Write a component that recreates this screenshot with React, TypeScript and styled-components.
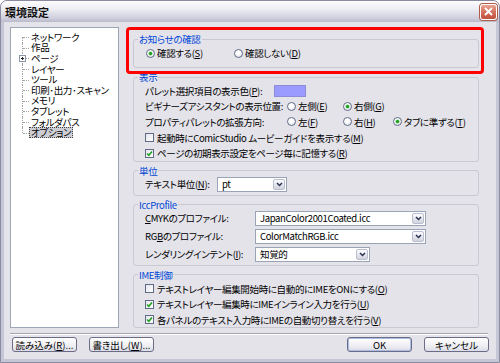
import React from "react";
import styled, { createGlobalStyle } from "styled-components";

const GlobalStyle = createGlobalStyle`
  html, body { margin: 0; padding: 0; background: #ffffff; }
  * { box-sizing: border-box; }
`;

const Window = styled.div`
  width: 500px;
  height: 363px;
  display: flex;
  flex-direction: column;
  border: 1px solid #8a8aa0;
  border-radius: 7px 7px 0 0;
  overflow: hidden;
  background: #c6c6d6;
  font-family: "Noto Sans CJK JP", "Noto Sans", sans-serif;
  font-size: 9.5px;
  font-feature-settings: "palt";
  letter-spacing: -0.35px;
  color: #000;
`;

const TitleBar = styled.div`
  height: 21px;
  flex: none;
  display: flex;
  align-items: center;
  justify-content: space-between;
  padding: 0 2px 0 4px;
  background: linear-gradient(#fdfdfe, #ececf2 40%, #d0d0de 80%, #babacc);
`;

const Title = styled.span`
  font-size: 11px;
  font-weight: bold;
  letter-spacing: 0;
  color: #101010;
`;

const CloseButton = styled.div`
  width: 17px;
  height: 16px;
  border: 1px solid #ffffff;
  border-radius: 3px;
  background: linear-gradient(#e9a594, #d4705c 50%, #c0503c);
  box-shadow: 0 0 0 1px #b05a4a;
  display: flex;
  align-items: center;
  justify-content: center;
`;

const Body = styled.div`
  flex: 1;
  margin: 0 3px 3px;
  background: #e4e3ea;
  padding: 5px 0 0 6px;
  display: flex;
  flex-direction: column;
`;

const Main = styled.div`
  display: flex;
  height: 301px;
  flex: none;
`;

const Tree = styled.div`
  width: 109px;
  height: 301px;
  flex: none;
  background: #ffffff;
  border: 1px solid #9ea6b6;
  padding-top: 4px;
`;

const TreeItem = styled.div<{ $first?: boolean; $last?: boolean }>`
  position: relative;
  height: 10.6px;
  display: flex;
  align-items: center;
  padding-left: 18px;
  white-space: nowrap;

  &::before {
    content: "";
    position: absolute;
    left: 11px;
    top: ${(p) => (p.$first ? "50%" : "0")};
    bottom: ${(p) => (p.$last ? "50%" : "0")};
    border-left: 1px dotted #a4a4a4;
  }
  &::after {
    content: "";
    position: absolute;
    left: 12px;
    width: 6px;
    top: 50%;
    border-top: 1px dotted #a4a4a4;
  }
`;

const TreeLabel = styled.span<{ $selected?: boolean }>`
  padding: 0 1px;
  height: 11px;
  line-height: 9px;
  border: 1px ${(p) => (p.$selected ? "dotted #404040" : "solid transparent")};
  background: ${(p) => (p.$selected ? "#cdcdd5" : "transparent")};
`;

const Expander = styled.svg`
  position: absolute;
  left: 8px;
  top: 50%;
  margin-top: -3.5px;
  z-index: 1;
`;

const Settings = styled.div`
  position: relative;
  width: 346px;
  margin-left: 14px;
  padding-top: 6px;
  display: flex;
  flex-direction: column;
`;

const Highlight = styled.div`
  position: absolute;
  left: -7px;
  right: -5px;
  top: 0;
  height: 47px;
  border: 3px solid #ff0000;
  border-radius: 4px;
  pointer-events: none;
`;

const Group = styled.fieldset<{ $mt?: number; $pb?: number }>`
  margin: ${(p) => p.$mt ?? 3}px 0 0;
  padding: 0 4px ${(p) => p.$pb ?? 0}px 4px;
  border: 1px solid #c9c9d3;
  border-radius: 3px;
  min-width: 0;
`;

const Legend = styled.legend`
  padding: 0 1px;
  height: 12px;
  line-height: 12px;
  color: #0046d5;
`;

const Rows = styled.div`
  padding-left: 7px;
  display: flex;
  flex-direction: column;
`;

const Row = styled.div<{ $h?: number; $mb?: number }>`
  display: flex;
  align-items: center;
  height: ${(p) => p.$h ?? 16}px;
  margin-bottom: ${(p) => p.$mb ?? 0}px;
  white-space: nowrap;
`;

const FieldLabel = styled.span<{ $w: number }>`
  width: ${(p) => p.$w}px;
  flex: none;
  white-space: nowrap;
`;

const Swatch = styled.span`
  width: 32px;
  height: 12px;
  background: #9b9bff;
  border: 1px solid #8c8cd8;
`;

const ChoiceItem = styled.label<{ $w?: number }>`
  display: flex;
  align-items: center;
  gap: 2px;
  width: ${(p) => (p.$w ? `${p.$w}px` : "auto")};
  flex: none;
`;

const RadioCircle = styled.span<{ $on?: boolean }>`
  width: 9px;
  height: 9px;
  margin-left: 1px;
  border-radius: 50%;
  border: 1px solid #5f6b86;
  background: radial-gradient(circle at 40% 35%, #ffffff 30%, #dcdce6);
  display: flex;
  align-items: center;
  justify-content: center;
  &::after {
    content: "";
    display: ${(p) => (p.$on ? "block" : "none")};
    width: 3px;
    height: 3px;
    border-radius: 50%;
    background: #21a121;
    box-shadow: 0 0 0 0.5px #5fc45f;
  }
`;

const CheckBox = styled.span`
  width: 9px;
  height: 9px;
  border: 1px solid #5f6b86;
  background: linear-gradient(135deg, #e6e6ee, #ffffff);
  display: flex;
  align-items: center;
  justify-content: center;
  margin-right: 1px;
`;

const Select = styled.div<{ $w: number }>`
  width: ${(p) => p.$w}px;
  height: 15px;
  flex: none;
  display: flex;
  align-items: stretch;
  background: #ffffff;
  border: 1px solid #9aa4b6;
  padding: 1px;
`;

const SelectText = styled.span`
  flex: 1;
  display: flex;
  align-items: center;
  padding-left: 3px;
  white-space: nowrap;
`;

const DropButton = styled.span`
  width: 12px;
  flex: none;
  border: 1px solid #b9bfd0;
  border-radius: 2px;
  background: linear-gradient(#fdfdff, #e2e2ec 60%, #d2d2de);
  display: flex;
  align-items: center;
  justify-content: center;
`;

const Separator = styled.div`
  height: 2px;
  margin: 5px 8px 0 0;
  border-top: 1px solid #a6a6b0;
  border-bottom: 1px solid #ffffff;
`;

const Footer = styled.div`
  display: flex;
  justify-content: space-between;
  margin-top: 2px;
  padding: 0 7px 0 2px;
`;

const ButtonGroup = styled.div`
  display: flex;
  gap: 12px;
`;

const Button = styled.button<{ $default?: boolean }>`
  width: 65px;
  height: 15px;
  padding: 0;
  border: 1px solid #6c6c86;
  border-radius: 3px;
  background: linear-gradient(#ffffff, #f0f0f4 55%, #dcdce6);
  box-shadow: ${(p) => (p.$default ? "inset 0 0 0 1px #a9bde6" : "none")};
  font: inherit;
  color: #000;
  line-height: 12px;
`;

const Check = () => (
  <svg width="7" height="7" viewBox="0 0 7 7">
    <polyline points="1,3.5 2.8,5.3 6,1.5" fill="none" stroke="#21a121" strokeWidth="1.6" />
  </svg>
);

const Chevron = () => (
  <svg width="7" height="5" viewBox="0 0 7 5">
    <polyline points="1,1 3.5,3.5 6,1" fill="none" stroke="#2a3450" strokeWidth="1.5" />
  </svg>
);

const Radio = ({ on, children, w }: { on?: boolean; children: React.ReactNode; w?: number }) => (
  <ChoiceItem $w={w}>
    <RadioCircle $on={on} />
    <span>{children}</span>
  </ChoiceItem>
);

const Checkbox = ({ on, children }: { on?: boolean; children: React.ReactNode }) => (
  <ChoiceItem>
    <CheckBox>{on && <Check />}</CheckBox>
    <span>{children}</span>
  </ChoiceItem>
);

const Dropdown = ({ w, value }: { w: number; value: string }) => (
  <Select $w={w}>
    <SelectText>{value}</SelectText>
    <DropButton>
      <Chevron />
    </DropButton>
  </Select>
);

const treeItems = [
  "ネットワーク",
  "作品",
  "ページ",
  "レイヤー",
  "ツール",
  "印刷･出力･スキャン",
  "メモリ",
  "タブレット",
  "フォルダパス",
  "オプション",
];

export default function App() {
  return (
    <>
      <GlobalStyle />
      <Window>
        <TitleBar>
          <Title>環境設定</Title>
          <CloseButton>
            <svg width="9" height="9" viewBox="0 0 9 9">
              <path d="M1 1 L8 8 M8 1 L1 8" stroke="#ffffff" strokeWidth="1.8" />
            </svg>
          </CloseButton>
        </TitleBar>
        <Body>
          <Main>
            <Tree>
              {treeItems.map((t, i) => (
                <TreeItem key={t} $first={i === 0} $last={i === treeItems.length - 1}>
                  {t === "ページ" && (
                    <Expander width="7" height="7" viewBox="0 0 7 7">
                      <rect x="0.5" y="0.5" width="6" height="6" fill="#fff" stroke="#8a95a8" />
                      <path d="M2 3.5 H5 M3.5 2 V5" stroke="#222" strokeWidth="1" />
                    </Expander>
                  )}
                  <TreeLabel $selected={t === "オプション"}>{t}</TreeLabel>
                </TreeItem>
              ))}
            </Tree>
            <Settings>
              <Group $mt={0} $pb={6}>
                <Legend>お知らせの確認</Legend>
                <Rows>
                  <Row>
                    <Radio on w={88}>
                      確認する(<u>S</u>)
                    </Radio>
                    <Radio>
                      確認しない(<u>D</u>)
                    </Radio>
                  </Row>
                </Rows>
              </Group>

              <Group>
                <Legend>表示</Legend>
                <Rows>
                  <Row $h={15.6}>
                    <FieldLabel $w={129}>
                      パレット選択項目の表示色(<u>P</u>):
                    </FieldLabel>
                    <Swatch />
                  </Row>
                  <Row $h={15.6}>
                    <FieldLabel $w={141}>ビギナーズアシスタントの表示位置:</FieldLabel>
                    <Radio w={56}>
                      左側(<u>E</u>)
                    </Radio>
                    <Radio on>
                      右側(<u>G</u>)
                    </Radio>
                  </Row>
                  <Row $h={15.6}>
                    <FieldLabel $w={141}>プロパティパレットの拡張方向:</FieldLabel>
                    <Radio w={56}>
                      左(<u>F</u>)
                    </Radio>
                    <Radio w={50}>
                      右(<u>H</u>)
                    </Radio>
                    <Radio on>
                      タブに準ずる(<u>T</u>)
                    </Radio>
                  </Row>
                  <Row $h={15.6}>
                    <Checkbox>
                      起動時にComicStudio ムービーガイドを表示する(<u>M</u>)
                    </Checkbox>
                  </Row>
                  <Row $h={15.6}>
                    <Checkbox on>
                      ページの初期表示設定をページ毎に記憶する(<u>R</u>)
                    </Checkbox>
                  </Row>
                </Rows>
              </Group>

              <Group $pb={3}>
                <Legend>単位</Legend>
                <Rows>
                  <Row $h={15}>
                    <FieldLabel $w={72}>
                      テキスト単位(<u>N</u>):
                    </FieldLabel>
                    <Dropdown w={70} value="pt" />
                  </Row>
                </Rows>
              </Group>

              <Group $pb={3}>
                <Legend>IccProfile</Legend>
                <Rows>
                  <Row $h={15} $mb={3}>
                    <FieldLabel $w={110}>
                      <u>C</u>MYKのプロファイル:
                    </FieldLabel>
                    <Dropdown w={171} value="JapanColor2001Coated.icc" />
                  </Row>
                  <Row $h={15} $mb={3}>
                    <FieldLabel $w={110}>
                      RG<u>B</u>のプロファイル:
                    </FieldLabel>
                    <Dropdown w={171} value="ColorMatchRGB.icc" />
                  </Row>
                  <Row $h={15}>
                    <FieldLabel $w={110}>
                      レンダリングインテント(<u>I</u>):
                    </FieldLabel>
                    <Dropdown w={115} value="知覚的" />
                  </Row>
                </Rows>
              </Group>

              <Group>
                <Legend>IME制御</Legend>
                <Rows>
                  <Row $h={15.5}>
                    <Checkbox>
                      テキストレイヤー編集開始時に自動的にIMEをONにする(<u>O</u>)
                    </Checkbox>
                  </Row>
                  <Row $h={15.5}>
                    <Checkbox on>
                      テキストレイヤー編集時にIMEインライン入力を行う(<u>U</u>)
                    </Checkbox>
                  </Row>
                  <Row $h={15.5}>
                    <Checkbox on>
                      各パネルのテキスト入力時にIMEの自動切り替えを行う(<u>V</u>)
                    </Checkbox>
                  </Row>
                </Rows>
              </Group>

              <Highlight />
            </Settings>
          </Main>
          <Separator />
          <Footer>
            <ButtonGroup>
              <Button>
                読み込み(<u>R</u>)...
              </Button>
              <Button>
                書き出し(<u>W</u>)...
              </Button>
            </ButtonGroup>
            <ButtonGroup>
              <Button $default>OK</Button>
              <Button>キャンセル</Button>
            </ButtonGroup>
          </Footer>
        </Body>
      </Window>
    </>
  );
}
